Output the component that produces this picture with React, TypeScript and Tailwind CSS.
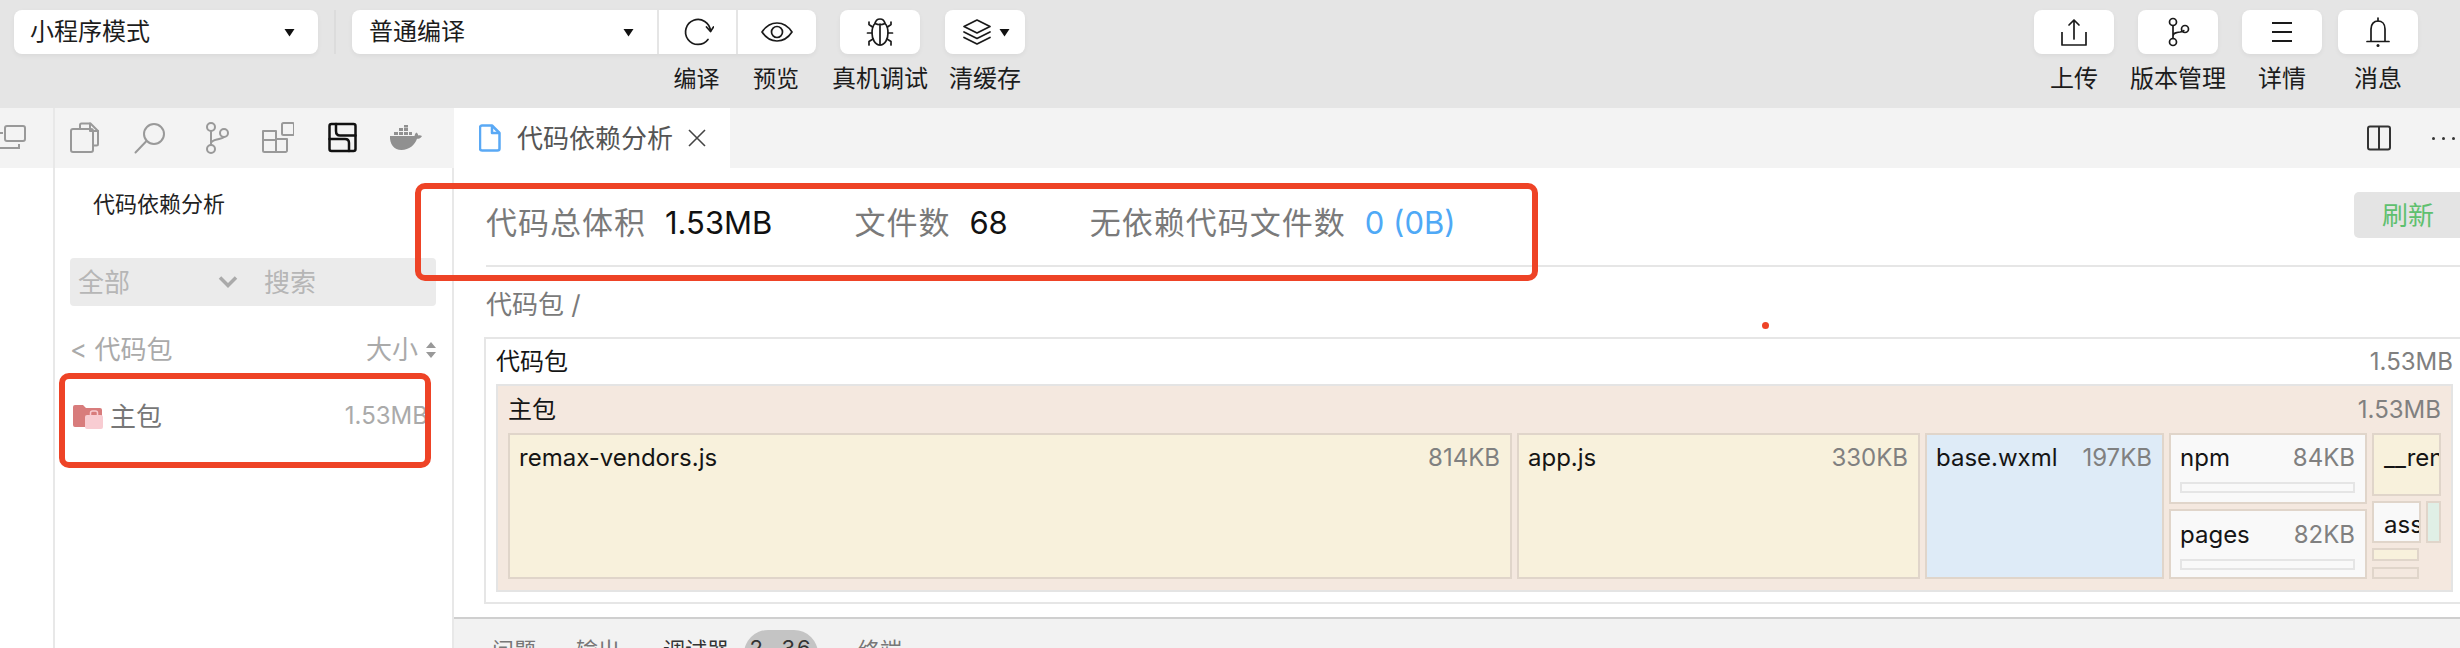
import type { ReactNode } from "react";

function Caret({ className = "" }: { className?: string }) {
  return (
    <svg width="11" height="9" viewBox="0 0 11 9" className={className} aria-hidden>
      <path d="M0.5 1h10L5.5 8.5z" fill="#111" />
    </svg>
  );
}

function ToolIcon({ children, size = 32 }: { children: ReactNode; size?: number }) {
  return (
    <svg
      width={size}
      height={size}
      viewBox="0 0 32 32"
      fill="none"
      stroke="#1a1a1a"
      strokeWidth="1.7"
      strokeLinecap="round"
      strokeLinejoin="round"
      aria-hidden
    >
      {children}
    </svg>
  );
}

function ToolButton({ label, children }: { label: string; children: ReactNode }) {
  return (
    <div className="flex w-[80px] flex-col items-center">
      <div className="flex h-[44px] w-[80px] items-center justify-center rounded-[8px] bg-white shadow-[0_2px_5px_rgba(0,0,0,0.05)]">
        {children}
      </div>
      <span className="mt-[11px] whitespace-nowrap text-[24px] leading-[28px] text-[#1c1c1c]">{label}</span>
    </div>
  );
}

function Toolbar() {
  return (
    <div className="flex h-[108px] justify-between bg-[#e5e5e5] pl-[14px] pr-[42px] pt-[10px]">
      <div className="flex">
        <div className="flex h-[44px] w-[304px] items-center justify-between rounded-[8px] bg-white pl-[16px] pr-[23px] shadow-[0_2px_5px_rgba(0,0,0,0.05)]">
          <span className="text-[24px] text-[#1c1c1c]">小程序模式</span>
          <Caret />
        </div>
        <div className="ml-[16px] mr-[16px] h-[44px] w-[2px] bg-[#dcdcdc]" />
        <div className="flex flex-col">
          <div className="flex h-[44px] w-[464px] rounded-[8px] bg-white shadow-[0_2px_5px_rgba(0,0,0,0.05)]">
            <div className="flex w-[305px] items-center justify-between pl-[17px] pr-[23px]">
              <span className="text-[24px] text-[#1c1c1c]">普通编译</span>
              <Caret />
            </div>
            <div className="flex w-[79px] items-center justify-center border-l-2 border-[#e5e5e5]">
              <ToolIcon>
                <path d="M26 23.500A12.500 12.500 0 1 1 28.500 15" />
                <path d="M24.500 11l4 4.500 3-4.500" />
              </ToolIcon>
            </div>
            <div className="flex w-[80px] items-center justify-center border-l-2 border-[#e5e5e5]">
              <ToolIcon>
                <path d="M1 16c4-6 9-9 15-9s11 3 15 9c-4 6-9 9-15 9s-11-3-15-9z" />
                <circle cx="16" cy="16" r="5.500" />
              </ToolIcon>
            </div>
          </div>
          <div className="flex">
            <span className="ml-[305px] mt-[11px] w-[79px] text-center text-[23px] leading-[28px] text-[#1c1c1c]">编译</span>
            <span className="mt-[11px] w-[80px] text-center text-[23px] leading-[28px] text-[#1c1c1c]">预览</span>
          </div>
        </div>
        <div className="ml-[24px] flex gap-[25px]">
          <ToolButton label="真机调试">
            <ToolIcon>
              <path d="M16 3c-2.500 0-4.500 2-5 4.500C8.500 10 8 13 8 17c0 6 3 12 8 12s8-6 8-12c0-4-.5-7-3-9.500C20.500 5 18.500 3 16 3z" />
              <path d="M11 7.500c3 1.500 7 1.500 10 0M16 8v21" />
              <path d="M8.500 11L5 8.500V6M23.500 11L27 8.500V6M8 17H3.500M24 17h4.500M9 23l-4 2.500V29M23 23l4 2.500V29" />
            </ToolIcon>
          </ToolButton>
          <div className="flex w-[80px] flex-col items-center">
            <div className="flex h-[44px] w-[80px] items-center justify-center gap-[6px] rounded-[8px] bg-white shadow-[0_2px_5px_rgba(0,0,0,0.05)]">
              <ToolIcon>
                <path d="M16 4l13 6.500-13 6.500-13-6.500z" />
                <path d="M3 16l13 6.500L29 16M3 21.500L16 28l13-6.500" />
              </ToolIcon>
              <Caret />
            </div>
            <span className="mt-[11px] whitespace-nowrap text-[24px] leading-[28px] text-[#1c1c1c]">清缓存</span>
          </div>
        </div>
      </div>
      <div className="flex">
        <ToolButton label="上传">
          <ToolIcon>
            <path d="M4 16v13h24V16" strokeLinecap="butt" />
            <path d="M16 23V4M11 9l5-5 5 5" />
          </ToolIcon>
        </ToolButton>
        <div className="ml-[24px]">
          <ToolButton label="版本管理">
            <ToolIcon>
              <circle cx="11" cy="6" r="3.500" />
              <circle cx="11" cy="26" r="3.500" />
              <circle cx="23" cy="13" r="3.500" />
              <path d="M11 9.500v13M11 20c0-3 3-3.500 7-4 2-.3 3.500-.5 3.800-1.500" />
            </ToolIcon>
          </ToolButton>
        </div>
        <div className="ml-[24px]">
          <ToolButton label="详情">
            <ToolIcon>
              <path d="M6 7h20M6 16h20M6 25h20" strokeLinecap="butt" strokeWidth="2" />
            </ToolIcon>
          </ToolButton>
        </div>
        <div className="ml-[16px]">
          <ToolButton label="消息">
            <ToolIcon>
              <path d="M9 25V13c0-5 3-8 7-8s7 3 7 8v12" />
              <path d="M5 25.500h22" />
              <circle cx="16" cy="29.500" r="1.500" fill="#1a1a1a" stroke="none" />
              <path d="M16 2v3" />
            </ToolIcon>
          </ToolButton>
        </div>
      </div>
    </div>
  );
}

function RailIcon({ children, dark }: { children: ReactNode; dark?: boolean }) {
  return (
    <svg
      width="32"
      height="32"
      viewBox="0 0 32 32"
      fill="none"
      stroke={dark ? "#111" : "#999"}
      strokeWidth="2"
      strokeLinecap="round"
      strokeLinejoin="round"
      aria-hidden
    >
      {children}
    </svg>
  );
}

function TabBar() {
  return (
    <div className="flex h-[60px] bg-[#f3f3f3]">
      <div className="flex w-[53px] items-center overflow-hidden">
        <svg width="27" height="26" viewBox="0 0 27 26" fill="none" stroke="#999" strokeWidth="2" aria-hidden>
          <rect x="5" y="1" width="20" height="15" rx="2" />
          <path d="M0 8h3M0 23h19v-4" />
        </svg>
      </div>
      <div className="flex w-[401px] items-center border-l-2 border-[#e8e8e8] pl-[14px]">
        <RailIcon>
          <path d="M11 7V3a1.500 1.500 0 0 1 1.500-1.500h9L29 9v13a1.500 1.500 0 0 1-1.500 1.500H24" />
          <path d="M21 1.500V9h8" />
          <rect x="2" y="7" width="22" height="23" rx="2" />
        </RailIcon>
        <div className="ml-[33px]">
          <RailIcon>
            <circle cx="20" cy="12" r="10" />
            <path d="M12.500 19L1.500 30.500" />
          </RailIcon>
        </div>
        <div className="ml-[34px]">
          <RailIcon>
            <circle cx="11" cy="5" r="4" />
            <circle cx="11" cy="27" r="4" />
            <circle cx="24" cy="11" r="4" />
            <path d="M11 9v14M11 21c1-3 4-3 8-4 3-.7 5-1.500 5-2" />
          </RailIcon>
        </div>
        <div className="ml-[30px]">
          <RailIcon>
            <rect x="20" y="1" width="12" height="12" rx="1.500" />
            <path d="M1 9h13v21H2.500A1.500 1.500 0 0 1 1 28.500zM14 17h11v11.500a1.500 1.500 0 0 1-1.500 1.500H14M1 18h13" />
          </RailIcon>
        </div>
        <div className="ml-[34px]">
          <RailIcon dark>
            <rect x="1.500" y="2" width="26" height="27" rx="2" strokeWidth="2.500" />
            <path d="M8 2v7c0 3 1.500 4.500 4 4.500h15.500M1.500 17H17c3 0 4 1.500 4 4v8" strokeWidth="2.500" />
          </RailIcon>
        </div>
        <div className="ml-[29px]">
          <svg width="34" height="26" viewBox="0 0 34 26" aria-hidden>
            <path
              d="M1 11h24.500c.5-2 1-3 2-3.500 1 .8 1.600 1.800 1.800 3 1.200-.3 2.400-.2 3.700.5-1 2-2.700 2.800-5 2.800C26 20 20 25 12.500 25 5 25 .5 19 1 11z"
              fill="#909090"
            />
            <path d="M5 7h4v3H5zM10 7h4v3h-4zM15 7h4v3h-4zM10 3h4v3h-4zM15 3h4v3h-4zM15 0h4v2.500h-4zM20 7h3v3h-3z" fill="#909090" />
          </svg>
        </div>
      </div>
      <div className="flex w-[276px] items-center bg-white pl-[25px]">
        <svg width="22" height="28" viewBox="0 0 22 28" fill="none" stroke="#5aa9f5" strokeWidth="2.500" strokeLinejoin="round" aria-hidden>
          <path d="M3 1.500h10L20.500 9v15.500a2 2 0 0 1-2 2H3a2 2 0 0 1-2-2v-21a2 2 0 0 1 2-2z" />
          <path d="M13 1.500V9h7.500" />
        </svg>
        <span className="ml-[16px] whitespace-nowrap text-[26px] text-[#555]">代码依赖分析</span>
        <svg width="18" height="18" viewBox="0 0 18 18" className="ml-[15px]" stroke="#444" strokeWidth="1.600" aria-hidden>
          <path d="M1 1l16 16M17 1L1 17" />
        </svg>
      </div>
      <div className="flex flex-1 items-center justify-end pr-[5px]">
        <svg width="26" height="26" viewBox="0 0 26 26" fill="none" stroke="#333" strokeWidth="2" aria-hidden>
          <rect x="2" y="1.500" width="22" height="23" rx="2" />
          <path d="M13 1.500v23" />
        </svg>
        <div className="ml-[40px] flex gap-[7px]">
          <i className="block size-[3px] rounded-full bg-[#333]" />
          <i className="block size-[3px] rounded-full bg-[#333]" />
          <i className="block size-[3px] rounded-full bg-[#333]" />
        </div>
      </div>
    </div>
  );
}

function Sidebar() {
  return (
    <div className="flex w-[401px] flex-col border-x-2 border-[#e8e8e8]">
      <div className="flex h-[90px] items-start pl-[38px] pt-[22px]">
        <span className="text-[22px] leading-[28px] text-[#222]">代码依赖分析</span>
      </div>
      <div className="ml-[15px] flex h-[48px] w-[366px] items-center rounded-[4px] bg-[#ebebeb] pl-[8px] text-[26px] text-[#b6b6b6]">
        <span className="w-[140px]">全部</span>
        <svg width="20" height="14" viewBox="0 0 20 14" fill="none" stroke="#aaa" strokeWidth="3.500" aria-hidden>
          <path d="M2 2.500l8 8 8-8" />
        </svg>
        <span className="ml-[26px]">搜索</span>
      </div>
      <div className="ml-[15px] mt-[26px] flex w-[366px] items-center justify-between text-[26px] leading-[36px] text-[#aaa]">
        <span>&lt; 代码包</span>
        <span className="flex items-center gap-[8px]">
          大小
          <svg width="10" height="16" viewBox="0 0 10 16" fill="#999" aria-hidden>
            <path d="M5 0l5 6H0zM5 16l5-6H0z" />
          </svg>
        </span>
      </div>
      <div className="ml-[18px] mt-[32px] flex w-[355px] items-center">
        <svg width="30" height="24" viewBox="0 0 30 24" aria-hidden>
          <path d="M0 2a2 2 0 0 1 2-2h8l3 3h14a2 2 0 0 1 2 2v15a2 2 0 0 1-2 2H2a2 2 0 0 1-2-2z" fill="#d87c7c" />
          <rect x="12" y="10" width="18" height="14" rx="2" fill="#f8ccd2" />
          <path d="M17.500 10V8a2 2 0 0 1 2-2h3a2 2 0 0 1 2 2v2" fill="none" stroke="#f8ccd2" strokeWidth="1.500" />
        </svg>
        <span className="ml-[7px] text-[26px] leading-[34px] text-[#777]">主包</span>
        <span className="ml-auto -mt-[3px] text-[24px] leading-[34px] text-[#aaa]">1.53MB</span>
      </div>
    </div>
  );
}

function Stat({ label, children, className = "" }: { label: string; children: ReactNode; className?: string }) {
  return (
    <div className={"flex items-center whitespace-nowrap " + className}>
      <span className="text-[31px] tracking-[1px] text-[#7a7a7a]">{label}</span>
      <span className="ml-[19px] text-[31px]">{children}</span>
    </div>
  );
}

function Leaf({
  name,
  size,
  className = "",
  bar,
}: {
  name: string;
  size: string;
  className?: string;
  bar?: boolean;
}) {
  return (
    <div className={"flex flex-col border-2 border-[#e0d5ca] pl-[9px] pr-[10px] pt-[8px] " + className}>
      <div className="flex justify-between text-[24px] leading-[30px]">
        <span className="text-[#151515]">{name}</span>
        <span className="text-[#808080]">{size}</span>
      </div>
      {bar && <div className="mt-[9px] h-[11px] border-2 border-[#e5e5e5]" />}
    </div>
  );
}

function Treemap() {
  return (
    <div className="ml-[-2px] mt-[14px] h-[267px] border-2 border-r-0 border-[#e6e6e6] pl-[10px] pr-[7px]">
      <div className="flex h-[45px] items-center justify-between text-[24px]">
        <span className="text-[#151515]">代码包</span>
        <span className="text-[#808080]">1.53MB</span>
      </div>
      <div className="h-[208px] border-2 border-[#e4e4e4] bg-[#f4e8df] pl-[10px] pr-[10px]">
        <div className="flex h-[47px] items-center justify-between text-[24px]">
          <span className="text-[#151515]">主包</span>
          <span className="text-[#808080]">1.53MB</span>
        </div>
        <div className="flex h-[146px] gap-[5px]">
          <Leaf name="remax-vendors.js" size="814KB" className="w-[1004px] bg-[#f8f1dc]" />
          <Leaf name="app.js" size="330KB" className="w-[403px] bg-[#f8f1dc]" />
          <Leaf name="base.wxml" size="197KB" className="w-[239px] bg-[#deebf7]" />
          <div className="flex w-[198px] flex-col gap-[5px]">
            <Leaf name="npm" size="84KB" bar className="h-[71px] bg-[#f9f9f9]" />
            <Leaf name="pages" size="82KB" bar className="h-[70px] bg-[#f9f9f9] pt-[9px]" />
          </div>
          <div className="flex w-[69px] flex-col">
            <div className="flex h-[64px] overflow-hidden whitespace-nowrap border-2 border-[#e0d5ca] bg-[#f8f1dc] pl-[10px] pt-[8px] text-[24px] leading-[30px] text-[#151515]">
              __render
            </div>
            <div className="mt-[5px] flex h-[43px] gap-[5px]">
              <div className="w-[50px] overflow-hidden whitespace-nowrap border-2 border-[#e0d5ca] bg-[#f9f9f9] pl-[10px] pt-[7px] text-[24px] leading-[30px] text-[#151515]">
                assets
              </div>
              <div className="w-[15px] border-2 border-[#e0d5ca] bg-[#e0efe6]" />
            </div>
            <div className="mt-[5px] h-[13px] w-[47px] border-2 border-[#e0d5ca] bg-[#f8f1dc]" />
            <div className="mt-[6px] h-[12px] w-[47px] border-2 border-[#e0d5ca] bg-[#f4e8df]" />
          </div>
        </div>
      </div>
    </div>
  );
}

function BottomPanel() {
  return (
    <div className="flex h-[31px] items-start overflow-hidden border-t-2 border-[#cfcfcf] bg-[#f2f2f2] pl-[38px] text-[22px] leading-[30px] text-[#777]">
      <span className="mt-[16px]">问题</span>
      <span className="ml-[40px] mt-[16px]">输出</span>
      <span className="ml-[43px] mt-[16px] text-[#333]">调试器</span>
      <span className="ml-[15px] mt-[11px] h-[48px] w-[74px] rounded-[24px] bg-[#c4c4c4] pt-[3px] text-center tracking-[2px] text-[#333]">2, 36</span>
      <span className="ml-[40px] mt-[16px]">终端</span>
    </div>
  );
}

export default function App() {
  return (
    <div className="relative h-[648px] w-[2460px] overflow-hidden bg-white font-[Inter,'Noto_Sans_CJK_SC',sans-serif]">
      <Toolbar />
      <TabBar />
      <div className="flex h-[480px]">
        <div className="w-[53px]" />
        <Sidebar />
        <main className="flex min-w-0 flex-1 flex-col">
          <div className="flex-1 pl-[32px]">
            <div className="flex h-[99px] justify-between border-b-2 border-[#e6e6e6]">
              <div className="flex pt-[32px]">
                <Stat label="代码总体积" className="h-[46px] text-[#111]">1.53MB</Stat>
                <Stat label="文件数" className="ml-[82px] h-[46px] text-[#111]">68</Stat>
                <Stat label="无依赖代码文件数" className="ml-[82px] h-[46px] text-[#4fa9f6]">0 (0B)</Stat>
              </div>
              <div className="mt-[24px] flex h-[46px] w-[106px] items-center justify-center rounded-l-[5px] bg-[#e4e4e4] pl-[2px] text-[26px] text-[#5fc06e]">
                刷新
              </div>
            </div>
            <div className="mt-[20px] h-[36px] text-[26px] leading-[36px] text-[#7a7a7a]">代码包 /</div>
            <Treemap />
          </div>
          <BottomPanel />
        </main>
      </div>
      {/* red marks drawn over the screenshot */}
      <div className="absolute left-[415px] top-[183px] h-[98px] w-[1123px] rounded-[10px] border-[6px] border-[#ee4326]" />
      <div className="absolute left-[59px] top-[373px] h-[95px] w-[372px] rounded-[10px] border-[6px] border-[#ee4326]" />
      <div className="absolute left-[1762px] top-[322px] size-[7px] rounded-full bg-[#ee4326]" />
    </div>
  );
}
